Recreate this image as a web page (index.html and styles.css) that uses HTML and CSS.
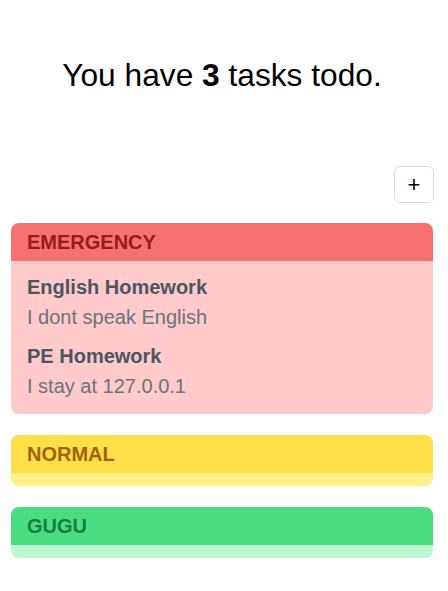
FILE: index.html
```html
<!DOCTYPE html>
<html lang="en">
<head>
<meta charset="utf-8">
<title>Todo</title>
<link rel="stylesheet" href="styles.css">
</head>
<body>
  <main class="app">
    <h1 class="headline">You have <b>3</b> tasks todo.</h1>
    <div class="toolbar">
      <button class="add-btn" type="button">+</button>
    </div>
    <section class="groups">
      <div class="group group-red">
        <div class="group-head">EMERGENCY</div>
        <div class="group-body">
          <div class="task">
            <div class="task-title">English Homework</div>
            <div class="task-desc">I dont speak English</div>
          </div>
          <div class="task">
            <div class="task-title">PE Homework</div>
            <div class="task-desc">I stay at 127.0.0.1</div>
          </div>
        </div>
      </div>
      <div class="group group-yellow">
        <div class="group-head">NORMAL</div>
        <div class="group-body"></div>
      </div>
      <div class="group group-green">
        <div class="group-head">GUGU</div>
        <div class="group-body"></div>
      </div>
    </section>
  </main>
</body>
</html>
```
FILE: styles.css
```css
* { box-sizing: border-box; }
html, body { margin: 0; padding: 0; background: #fff; }
body {
  font-family: "Liberation Sans", Arial, sans-serif;
  color: #000;
}
.app {
  padding: 57px 15px 0 11px;
}
.headline {
  margin: 0;
  font-size: 31.7px;
  line-height: 36px;
  font-weight: 400;
  text-align: center;
}
.headline b { font-weight: 700; }
.toolbar {
  display: flex;
  justify-content: flex-end;
  margin-top: 73px;
}
.add-btn {
  width: 40px;
  height: 37px;
  padding: 0;
  margin-right: -1px;
  border: 1px solid #dcdcdc;
  border-radius: 6px;
  background: #fff;
  font-family: "Liberation Sans", Arial, sans-serif;
  font-size: 22px;
  line-height: 1;
  color: #000;
}
.groups {
  margin-top: 20px;
  display: flex;
  flex-direction: column;
  gap: 21px;
}
.group {
  border-radius: 8px;
  overflow: hidden;
}
.group-head {
  padding: 5px 16px;
  font-size: 20px;
  line-height: 28px;
  font-weight: 700;
}
.group-body {
  padding: 6.5px 16px;
}
.task {
  padding: 5.5px 0;
}
.task:last-child { padding-bottom: 7px; }
.task-title {
  font-size: 20px;
  line-height: 28px;
  font-weight: 700;
  color: #4b5563;
}
.task-desc {
  margin-top: 2px;
  font-size: 20px;
  line-height: 28px;
  color: #6b7280;
}
.group-red .group-head { background: #f87171; color: #991b1b; }
.group-red .group-body { background: #fecaca; }
.group-yellow .group-head { background: #fde047; color: #a16207; }
.group-yellow .group-body { background: #fef08a; }
.group-green .group-head { background: #4ade80; color: #15803d; }
.group-green .group-body { background: #bbf7d0; }
```
